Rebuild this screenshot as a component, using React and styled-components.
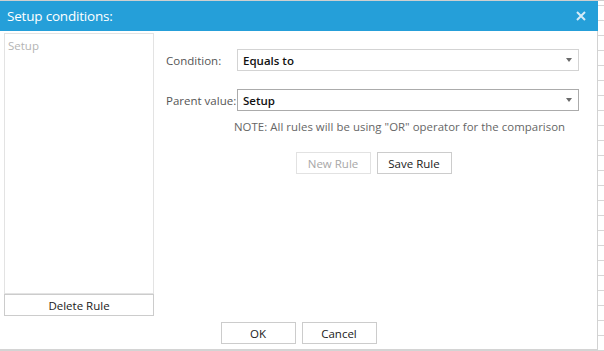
// NPM
import React from 'react';
import styled, { createGlobalStyle } from 'styled-components';

// STYLES
const GlobalStyle = createGlobalStyle`
  html, body {
    margin: 0;
    padding: 0;
    background: #ffffff;
  }

  body {
    font-family: 'Open Sans', 'Noto Sans', sans-serif;
  }
`;

const Page = styled.div`
  display: flex;
  width: 604px;
  height: 351px;
  border-top: 1px solid #cfcfcf;
  box-sizing: border-box;
  overflow: hidden;
`;

const Dialog = styled.div`
  display: flex;
  flex-direction: column;
  width: 598px;
  flex-shrink: 0;
`;

const TitleBar = styled.div`
  display: flex;
  align-items: center;
  justify-content: space-between;
  height: 30px;
  padding: 0 8px 0 7px;
  background: #259fd9;
  color: #ffffff;
  font-size: 13.5px;
  letter-spacing: -0.2px;
`;

const Close = styled.svg`
  width: 10px;
  height: 10px;
  margin-right: 4px;
`;

const Body = styled.div`
  flex: 1;
  display: flex;
  flex-direction: column;
  padding: 2px 0 0 4px;
  border-right: 1px solid #d2d2d2;
  border-bottom: 2px solid #d4d4d4;
`;

const Main = styled.div`
  display: flex;
  gap: 12px;
`;

const LeftPane = styled.div`
  display: flex;
  flex-direction: column;
  width: 150px;
`;

const ListBox = styled.div`
  height: 261px;
  box-sizing: border-box;
  border: 1px solid #e3e3e3;
  padding: 4px 3px;
  font-size: 11.5px;
  color: #b4b4b4;
`;

const Button = styled.button`
  height: 22px;
  width: ${(p) => p.$width || '75px'};
  box-sizing: border-box;
  background: #ffffff;
  border: 1px solid ${(p) => (p.disabled ? '#e2e2e2' : '#cccccc')};
  color: ${(p) => (p.disabled ? '#a8a8a8' : '#1a1a1a')};
  font-family: inherit;
  font-size: 11.5px;
  padding: 0;
  cursor: pointer;
`;

const RightPane = styled.div`
  flex: 1;
  display: flex;
  flex-direction: column;
  padding-top: 16px;
  padding-right: 18px;
`;

const FormRow = styled.div`
  display: flex;
  align-items: center;
  margin-bottom: ${(p) => p.$gap || '18px'};
`;

const Label = styled.label`
  width: 71px;
  font-size: 11.5px;
  color: #555555;
  white-space: nowrap;
`;

const Select = styled.div`
  flex: 1;
  display: flex;
  align-items: center;
  justify-content: space-between;
  height: 22px;
  box-sizing: border-box;
  padding: 0 6px 0 5px;
  border: 1px solid ${(p) => (p.$focused ? '#ababab' : '#d3d3d3')};
  font-size: 11.5px;
  font-weight: 600;
  color: #111111;
`;

const Arrow = styled.span`
  width: 0;
  height: 0;
  border-left: 3px solid transparent;
  border-right: 3px solid transparent;
  border-top: 4px solid #6a6a6a;
`;

const Note = styled.div`
  padding-left: 68px;
  margin-top: -10px;
  font-size: 11.4px;
  letter-spacing: 0.04px;
  color: #666666;
  white-space: nowrap;
`;

const RuleButtons = styled.div`
  display: flex;
  justify-content: center;
  gap: 6px;
  margin-top: 18px;
  padding-left: 2px;
`;

const Footer = styled.div`
  display: flex;
  justify-content: center;
  gap: 6px;
  margin: 6px 0 0 -4px;
`;

const Backdrop = styled.div`
  flex: 1;
  background-color: #ffffff;
  background-image: repeating-linear-gradient(
    to bottom,
    transparent 0,
    transparent 4px,
    #d6d6d6 4px,
    #d6d6d6 5px,
    transparent 5px,
    transparent 15px
  );
  background-size: 100% 15px;
`;

// MODULE
export default function App() {
  return (
    <>
      <GlobalStyle />
      <Page>
        <Dialog>
          <TitleBar>
            <span>Setup conditions:</span>
            <Close viewBox="0 0 10 10">
              <path d="M1 1 L9 9 M9 1 L1 9" stroke="#d6ecf8" strokeWidth="2" />
            </Close>
          </TitleBar>
          <Body>
            <Main>
              <LeftPane>
                <ListBox>Setup</ListBox>
                <Button $width="150px">Delete Rule</Button>
              </LeftPane>
              <RightPane>
                <FormRow>
                  <Label>Condition:</Label>
                  <Select>
                    Equals to
                    <Arrow />
                  </Select>
                </FormRow>
                <FormRow>
                  <Label>Parent value:</Label>
                  <Select $focused>
                    Setup
                    <Arrow />
                  </Select>
                </FormRow>
                <Note>NOTE: All rules will be using "OR" operator for the comparison</Note>
                <RuleButtons>
                  <Button disabled>New Rule</Button>
                  <Button>Save Rule</Button>
                </RuleButtons>
              </RightPane>
            </Main>
            <Footer>
              <Button>OK</Button>
              <Button>Cancel</Button>
            </Footer>
          </Body>
        </Dialog>
        <Backdrop />
      </Page>
    </>
  );
}
